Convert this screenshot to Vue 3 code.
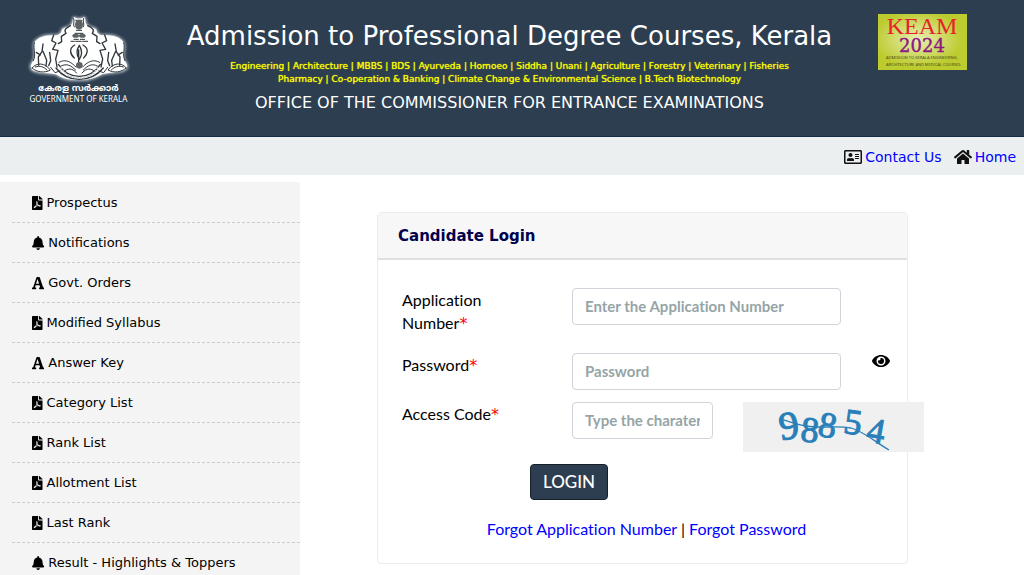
<script setup>
import { ref } from 'vue'

const icons = {
  pdf: {
    width: 384,
    path: 'M181.9 256.1c-5-16-4.9-46.9-2-46.9 8.4 0 7.6 36.9 2 46.9zm-1.7 47.2c-7.7 20.2-17.3 43.3-28.4 62.7 18.3-7 39-17.2 62.9-21.9-12.7-9.6-24.9-23.4-34.5-40.8zM86.1 428.1c0 .8 13.2-5.4 34.9-40.2-6.7 6.3-29.1 24.5-34.9 40.2zM248 160h136v328c0 13.3-10.7 24-24 24H24c-13.3 0-24-10.7-24-24V24C0 10.7 10.7 0 24 0h200v136c0 13.2 10.8 24 24 24zm-8 171.8c-20-12.2-33.3-29-42.7-53.8 4.5-18.5 11.6-46.6 6.2-64.2-4.7-29.4-42.4-26.5-47.8-6.8-5 18.3-.4 44.1 8.1 77-11.6 27.6-28.7 64.6-40.8 85.8-.1 0-.1.1-.2.1-27.1 13.9-73.6 44.5-54.5 68 5.6 6.9 16 10 21.5 10 17.9 0 35.7-18 61.1-61.8 25.8-8.5 54.1-19.1 79-23.2 21.7 11.8 47.1 19.5 64 19.5 29.2 0 31.2-32 19.7-43.4-13.9-13.6-54.3-9.7-73.6-7.2zM377 105L279 7c-4.5-4.5-10.6-7-17-7h-6v128h128v-6.1c0-6.3-2.5-12.4-7-16.9zm-74.1 255.3c4.1-2.7-2.5-11.9-42.8-9 37.1 15.8 42.8 9 42.8 9z'
  },
  bell: {
    width: 448,
    path: 'M224 512c35.32 0 63.97-28.65 63.97-64H160.03c0 35.35 28.65 64 63.97 64zm215.39-149.71c-19.32-20.76-55.47-51.99-55.47-154.29 0-77.7-54.48-139.9-127.94-155.16V32c0-17.67-14.32-32-31.98-32s-31.98 14.33-31.98 32v20.84C118.56 68.1 64.08 130.3 64.08 208c0 102.3-36.15 133.53-55.47 154.29-6 6.45-8.66 14.16-8.61 21.71.11 16.4 12.98 32 32.1 32h383.8c19.12 0 32-15.6 32.1-32 .05-7.55-2.61-15.27-8.61-21.71z'
  },
  font: {
    width: 448,
    path: 'M432 416h-24L286 52a30 30 0 0 0-28-20h-68a30 30 0 0 0-28 20L40 416H16a16 16 0 0 0-16 16v32a16 16 0 0 0 16 16h122a16 16 0 0 0 16-16v-32a16 16 0 0 0-16-16h-28l22-74h144l22 74h-22a16 16 0 0 0-16 16v32a16 16 0 0 0 16 16h148a16 16 0 0 0 16-16v-32a16 16 0 0 0-16-16zM148 286L202 108 258 286z'
  }
}

const menu = [
  { label: 'Prospectus', icon: 'pdf' },
  { label: 'Notifications', icon: 'bell' },
  { label: 'Govt. Orders', icon: 'font' },
  { label: 'Modified Syllabus', icon: 'pdf' },
  { label: 'Answer Key', icon: 'font' },
  { label: 'Category List', icon: 'pdf' },
  { label: 'Rank List', icon: 'pdf' },
  { label: 'Allotment List', icon: 'pdf' },
  { label: 'Last Rank', icon: 'pdf' },
  { label: 'Result - Highlights & Toppers', icon: 'bell' }
]

const applicationNumber = ref('')
const password = ref('')
const accessCode = ref('')
const showPassword = ref(false)
</script>

<template>
  <div class="page">
    <header class="banner">
      <div class="state">
        <svg class="emblem" viewBox="45 45 315 210" aria-hidden="true">
          <defs>
            <filter id="glow" x="-20%" y="-20%" width="140%" height="140%">
              <feGaussianBlur stdDeviation="5" />
            </filter>
          </defs>
          <path d="M190 52C181 54 186 68 178 76C170 84 157 82 150 91C151 103 138 108 128 106C105 103 75 113 67 130C62 150 74 164 64 184C54 198 52 212 66 218C82 226 118 224 133 228C160 247 185 247 204 246C228 248 250 241 275 228C294 222 326 225 342 216C357 208 352 196 344 184C336 165 347 150 341 130C334 114 306 103 280 106C270 108 258 103 259 91C252 82 238 84 230 76C222 68 229 54 219 52C210 58 199 58 190 52Z" fill="#eef2f5" filter="url(#glow)" opacity=".75" />
          <path d="M190 54C183 56 188 70 180 78C172 86 159 84 152 93C152 105 139 110 128 109C105 106 78 115 70 131C65 151 77 165 67 185C57 198 57 210 68 215C86 223 118 221 135 226C160 243 184 243 204 242C226 244 250 239 273 226C294 220 324 222 340 213C352 206 350 196 341 185C333 165 344 150 338 131C330 115 306 106 281 109C270 110 257 105 257 93C250 84 236 86 228 78C220 70 226 56 219 54C210 60 199 60 190 54Z" fill="#fff" />
          <g fill="none" stroke="#30363a" stroke-width="4" stroke-linecap="round" stroke-linejoin="round">
            <path d="M128 108L122 125L135 132L125 151L141 154L134 180L138 204M281 108L287 125L273 132L284 151L267 154L275 180L270 204" />
            <path d="M178 80C164 88 158 92 165 103L151 112L152 128L142 134M230 80C246 88 251 92 244 103L258 112L257 128L267 134" />
            <path d="M96 135L93 158L82 174L83 199M96 157L107 184L105 201M76 160L88 168M116 160L119 185L113 200M312 135L316 158L327 174L326 199M314 157L302 184L304 201M334 160L321 168M293 160L290 185L296 200" />
            <path d="M70 131C65 151 77 165 67 185M338 131C344 150 332 165 342 185" stroke-width="3" />
            <path d="M191 138C173 148 177 166 190 177M216 138C235 148 230 166 218 177M205 139C195 154 197 169 205 181C213 169 214 154 205 139M203 153V188" />
            <path d="M142 196C159 222 180 232 205 232C230 232 252 220 268 196M135 207C156 235 180 241 205 241C232 241 255 233 277 207" />
            <path d="M63 207C77 190 101 190 118 213C101 223 77 220 63 207M346 207C332 190 308 190 291 213C310 223 330 220 346 207" stroke-width="3" />
            <path d="M73 204C88 199 97 203 108 213M337 204C323 199 311 203 301 213M119 205L132 221L147 216M290 205L278 221L263 216" stroke-width="3" />
            <path d="M144 190C165 178 181 190 195 204M266 190C246 178 228 190 215 204M150 201C168 192 180 200 194 213M259 201C242 192 230 200 217 213M163 214C176 206 188 211 197 222M247 214C234 206 223 211 213 222" stroke-width="3" />
            <path d="M180 127H190M194 127H211M215 127H230M189 121H202M208 121H221" stroke-width="3" />
            <path d="M188 58C192 67 184 77 190 84M218 58C214 67 222 77 217 84M194 64H213M196 94H212M192 103H216" stroke-width="3" />
          </g>
          <g fill="#5d6264">
            <ellipse cx="204" cy="77" rx="12" ry="15" />
            <ellipse cx="194" cy="110" rx="10" ry="6" />
            <ellipse cx="214" cy="110" rx="10" ry="6" />
            <circle cx="205" cy="199" r="10" />
          </g>
          <path d="M150 203C160 228 184 237 207 237C231 236 251 225 260 205" fill="none" stroke="#c8cdd0" stroke-width="5" stroke-dasharray="7 3" />
        </svg>
        <span class="state-local" lang="ml">കേരള സർക്കാർ</span>
        <span class="state-name">GOVERNMENT OF KERALA</span>
      </div>
      <div class="titles">
        <h1>Admission to Professional Degree Courses, Kerala</h1>
        <p class="courses">
          Engineering | Architecture | MBBS | BDS | Ayurveda | Homoeo | Siddha | Unani | Agriculture | Forestry | Veterinary | Fisheries<br />
          Pharmacy | Co-operation &amp; Banking | Climate Change &amp; Environmental Science | B.Tech Biotechnology
        </p>
        <h2>OFFICE OF THE COMMISSIONER FOR ENTRANCE EXAMINATIONS</h2>
      </div>
      <svg class="keam" viewBox="0 0 89 56" role="img" aria-label="KEAM 2024">
        <defs>
          <radialGradient id="lime" cx="45%" cy="45%" r="50%">
            <stop offset="0" stop-color="#e9efb4" />
            <stop offset="1" stop-color="#bccb2e" />
          </radialGradient>
        </defs>
        <rect width="89" height="56" fill="url(#lime)" />
        <text class="keam-name" x="44" y="20" text-anchor="middle">KEAM</text>
        <text class="keam-year" x="44" y="38" text-anchor="middle">2024</text>
        <text class="keam-note" x="8" y="45">ADMISSION TO KERALA ENGINEERING,</text>
        <text class="keam-note" x="8" y="52">ARCHITECTURE AND MEDICAL COURSES</text>
      </svg>
    </header>

    <nav class="topnav">
      <a href="#contact">
        <svg class="nav-icon" viewBox="0 0 576 512" aria-hidden="true">
          <path d="M528 32H48C21.5 32 0 53.5 0 80v352c0 26.5 21.5 48 48 48h480c26.5 0 48-21.5 48-48V80c0-26.5-21.5-48-48-48zm0 400H48V80h480v352zM208 256c35.3 0 64-28.7 64-64s-28.7-64-64-64-64 28.7-64 64 28.7 64 64 64zm-89.6 128h179.2c12.4 0 22.4-8.6 22.4-19.2v-19.2c0-31.8-30.1-57.6-67.2-57.6-10.8 0-18.7 8-44.8 8-26.9 0-33.4-8-44.8-8-37.1 0-67.2 25.8-67.2 57.6v19.2c0 10.6 10 19.2 22.4 19.2zM360 320h112c4.4 0 8-3.6 8-8v-16c0-4.4-3.6-8-8-8H360c-4.4 0-8 3.6-8 8v16c0 4.4 3.6 8 8 8zm0-64h112c4.4 0 8-3.6 8-8v-16c0-4.4-3.6-8-8-8H360c-4.4 0-8 3.6-8 8v16c0 4.4 3.6 8 8 8zm0-64h112c4.4 0 8-3.6 8-8v-16c0-4.4-3.6-8-8-8H360c-4.4 0-8 3.6-8 8v16c0 4.4 3.6 8 8 8z" />
        </svg>
        Contact Us
      </a>
      <a href="#home">
        <svg class="nav-icon" viewBox="0 0 576 512" aria-hidden="true">
          <path d="M280.37 148.26L96 300.11V464a16 16 0 0 0 16 16l112.06-.29a16 16 0 0 0 15.92-16V368a16 16 0 0 1 16-16h64a16 16 0 0 1 16 16v95.64a16 16 0 0 0 16 16.05L464 480a16 16 0 0 0 16-16V300L295.67 148.26a12.19 12.19 0 0 0-15.3 0zM571.6 251.47L488 182.56V44.05a12 12 0 0 0-12-12h-56a12 12 0 0 0-12 12v72.61L318.47 43a48 48 0 0 0-61 0L4.34 251.47a12 12 0 0 0-1.6 16.9l25.5 31A12 12 0 0 0 45.15 301l235.22-193.74a12.19 12.19 0 0 1 15.3 0L530.9 301a12 12 0 0 0 16.9-1.6l25.5-31a12 12 0 0 0-1.7-16.93z" />
        </svg>
        Home
      </a>
    </nav>

    <div class="content">
      <aside class="sidebar">
        <ul>
          <li v-for="item in menu" :key="item.label">
            <a href="#">
              <svg class="menu-icon" :viewBox="`0 0 ${icons[item.icon].width} 512`" aria-hidden="true">
                <path :d="icons[item.icon].path" />
              </svg>
              {{ item.label }}
            </a>
          </li>
        </ul>
      </aside>

      <main>
        <section class="card">
          <h3>Candidate Login</h3>
          <form @submit.prevent>
            <div class="row row-first">
              <label for="application">Application Number<span class="required">*</span></label>
              <input id="application" v-model="applicationNumber" type="text" placeholder="Enter the Application Number" />
            </div>
            <div class="row">
              <label for="password">Password<span class="required">*</span></label>
              <input id="password" v-model="password" :type="showPassword ? 'text' : 'password'" placeholder="Password" />
              <button class="eye" type="button" aria-label="Show password" @click="showPassword = !showPassword">
                <svg viewBox="0 0 576 512" aria-hidden="true">
                  <path d="M572.52 241.4C518.29 135.59 410.93 64 288 64S57.68 135.64 3.48 241.41a32.35 32.35 0 0 0 0 29.19C57.71 376.41 165.07 448 288 448s230.32-71.64 284.52-177.41a32.35 32.35 0 0 0 0-29.19zM288 400a144 144 0 1 1 144-144 143.93 143.93 0 0 1-144 144zm0-240a95.31 95.31 0 0 0-25.31 3.79 47.85 47.85 0 0 1-66.9 66.9A95.78 95.78 0 1 0 288 160z" />
                </svg>
              </button>
            </div>
            <div class="row row-code">
              <label for="code">Access Code<span class="required">*</span></label>
              <input id="code" v-model="accessCode" type="text" placeholder="Type the charaters" />
              <svg class="captcha" viewBox="0 0 181 50" role="img" aria-label="98854">
                <rect width="181" height="50" fill="#f0f0f0" />
                <g class="digits">
                  <text class="big" x="36" y="37" transform="rotate(-8 46 25)">9</text>
                  <text x="58" y="40" transform="rotate(6 66 28)">8</text>
                  <text x="76" y="35" transform="rotate(10 84 22)">8</text>
                  <text x="101" y="32" transform="rotate(8 110 20)">5</text>
                  <text x="124" y="41" transform="rotate(10 133 30)">4</text>
                </g>
                <path d="M38 17C47 20 55 23 64 24C77 27 93 23 108 26C122 30 132 40 146 48" fill="none" stroke="#2980b9" stroke-width="1.3" />
              </svg>
            </div>
            <button class="login" type="submit">LOGIN</button>
            <p class="links">
              <a href="#forgot-application">Forgot Application Number</a> | <a href="#forgot-password">Forgot Password</a>
            </p>
          </form>
        </section>
      </main>
    </div>
  </div>
</template>

<style>
body {
  background: #fff;
  overflow: hidden;
}
</style>

<style scoped>
.page {
  font-family: "DejaVu Sans", sans-serif;
  color: #000;
}

h1, h2, h3, p, ul {
  margin: 0;
  padding: 0;
  font-weight: 400;
}

a {
  color: #00f;
  text-decoration: none;
}

.banner {
  display: grid;
  grid-template-columns: 105px 1fr 89px;
  align-items: start;
  padding: 14px 57px 23px 26px;
  background: #2c3e50;
  border-bottom: 1px solid #142a43;
  color: #fff;
}

.state {
  display: flex;
  flex-direction: column;
  align-items: center;
  white-space: nowrap;
}

.emblem {
  width: 105px;
  height: 70px;
}

.state-local {
  font: bold 9px/10px "Noto Sans Malayalam", "Noto Sans", sans-serif;
}

.state-name {
  font: 8px/9px "Noto Sans", sans-serif;
}

.titles {
  padding-left: 10px;
  text-align: center;
  white-space: nowrap;
}

h1 {
  font-size: 26px;
  line-height: 44px;
}

.courses {
  margin-top: 2px;
  font-size: 9px;
  line-height: 13px;
  color: #ff0;
  text-shadow: 0 0 1px #ff0;
}

h2 {
  margin-top: 7px;
  font-size: 16px;
  line-height: 20px;
}

.keam {
  width: 89px;
  height: 56px;
}

.keam-name {
  font: 24px "Liberation Serif", serif;
  fill: #e9202c;
}

.keam-year {
  font: 18px "DejaVu Serif", serif;
  fill: #8d1a84;
  stroke: #8d1a84;
  stroke-width: 0.4;
}

.keam-note {
  font: 4px "Liberation Sans Narrow", "Open Sans", sans-serif;
  fill: #3f4218;
}

.topnav {
  display: flex;
  justify-content: flex-end;
  gap: 12px;
  padding: 10px 8px 8px 0;
  background: #ebeff0;
  font-size: 14px;
  line-height: 20px;
}

.topnav a {
  display: flex;
  align-items: center;
  gap: 3px;
}

.nav-icon {
  width: 18px;
  height: 16px;
  fill: #111;
}

.content {
  display: grid;
  grid-template-columns: 300px 1fr;
  margin-top: 7px;
}

.sidebar {
  padding: 1px 0 0 12px;
  background: #f4f4f4;
}

.sidebar li {
  list-style: none;
  padding-left: 20px;
  border-bottom: 1px dashed #ccc;
}

.sidebar a {
  display: flex;
  align-items: center;
  gap: 4px;
  color: #000;
  font-size: 13px;
  line-height: 39px;
}

.menu-icon {
  height: 14px;
  fill: #000;
}

main {
  display: grid;
  grid-template-columns: 77fr 531fr 116fr;
  align-items: start;
  padding-top: 30px;
}

.card {
  grid-column: 2;
  min-width: 0;
  border: 1px solid #ececec;
  border-radius: 4px;
  font-family: Lato, sans-serif;
}

h3 {
  padding: 12px 20px 11px;
  border-bottom: 2px solid #e0e0e0;
  background: #f7f7f7;
  color: #00004d;
  font: bold 15px/22px "DejaVu Sans", sans-serif;
}

form {
  padding: 28px 16px 22px 24px;
  font-size: 16px;
  font-variant-ligatures: none;
  line-height: 24px;
}

.row {
  display: flex;
  align-items: flex-start;
  margin-bottom: 12px;
}

.row-first {
  margin-bottom: 19px;
}

label {
  flex: none;
  box-sizing: border-box;
  width: 170px;
  padding-right: 60px;
  line-height: 23px;
}

.required {
  color: #f00;
  font-family: "DejaVu Sans", sans-serif;
  line-height: 16px;
}

input {
  flex: none;
  box-sizing: border-box;
  width: 269px;
  height: 37px;
  padding: 5px 12px 6px;
  border: 1px solid #ced4da;
  border-radius: 4px;
  background: #fff;
  font: bold 15px/24px Lato, sans-serif;
  font-variant-ligatures: none;
}

input::placeholder {
  color: #95a5a6;
  opacity: 1;
}

.row-code input {
  width: 141px;
}

.eye {
  margin-left: 31px;
  padding: 0;
  border: 0;
  background: none;
  line-height: 0;
}

.eye svg {
  width: 18px;
  height: 16px;
}

.captcha {
  flex: none;
  position: relative;
  width: 181px;
  height: 50px;
  margin-left: 30px;
}

.digits {
  font: 36px "Liberation Serif", serif;
  fill: #2980b9;
  stroke: #2980b9;
  stroke-width: 1;
}

.digits .big {
  font-size: 40px;
}

.login {
  display: block;
  margin-left: 128px;
  padding: 0 12px;
  border: 1px solid #16202b;
  border-radius: 4px;
  background: #2c3e50;
  color: #fff;
  font: 500 17px/34px Lato, sans-serif;
}

.links {
  margin-top: 17px;
  text-align: center;
}
</style>
